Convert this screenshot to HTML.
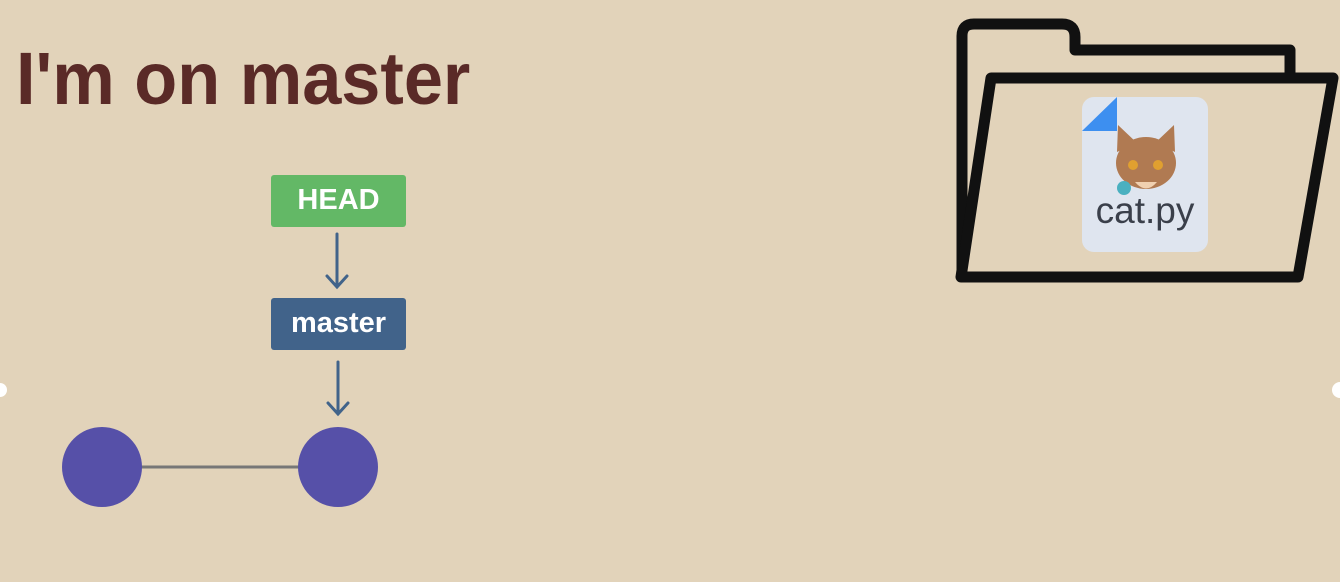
<!DOCTYPE html>
<html><head><meta charset="utf-8"><style>
html,body{margin:0;padding:0}
body{width:1340px;height:582px;background:#e2d3ba;position:relative;overflow:hidden;font-family:"Liberation Sans",sans-serif}
.t{position:absolute;left:16px;top:36px;font-size:74px;font-weight:bold;color:#5a2a27;white-space:nowrap;transform:scaleX(0.95);transform-origin:0 0}
.box{position:absolute;left:271px;width:135px;height:52px;border-radius:3px;color:#fff;font-weight:bold;font-size:29px;text-align:center;line-height:50px}
</style></head><body>
<div class="t">I'm on master</div>
<div class="box" style="top:175px;background:#63b866">HEAD</div>
<div class="box" style="top:298px;background:#41638a">master</div>
<svg width="1340" height="582" style="position:absolute;left:0;top:0">
<g stroke="#41638a" stroke-width="3" fill="none" stroke-linecap="round">
<path d="M337 234V287M327 276L337 287L347 276"/>
<path d="M338 362V414M328 403L338 414L348 403"/>
</g>
<line x1="102" y1="467" x2="338" y2="467" stroke="#777" stroke-width="3"/>
<circle cx="102" cy="467" r="40" fill="#5650a8"/>
<circle cx="338" cy="467" r="40" fill="#5650a8"/>
<circle cx="0" cy="390" r="7" fill="#fff"/>
<circle cx="1340" cy="390" r="8" fill="#fff"/>
<g stroke="#111" stroke-width="11" fill="none" stroke-linejoin="round">
<path d="M962 270V36Q962 24 974 24H1062Q1075 24 1075 37V50H1290V75"/>
<path d="M991 78H1333L1298 277H961Z"/>
</g>
<rect x="1082" y="97" width="126" height="155" rx="12" fill="#dfe5ef"/>
<path d="M1117 97V131H1082Z" fill="#3d8ff0"/>
<ellipse cx="1146" cy="163" rx="30" ry="26" fill="#b07a52"/>
<path d="M1117 152L1118 125L1137 143ZM1175 152L1174 125L1155 143Z" fill="#b07a52"/>
<circle cx="1133" cy="165" r="5" fill="#e0a030"/><circle cx="1158" cy="165" r="5" fill="#e0a030"/>
<path d="M1135 182Q1146 195 1157 182" fill="#f0d0b0"/>
<circle cx="1124" cy="188" r="7" fill="#4ab0c0"/>
</svg>
<div style="position:absolute;left:1082px;top:190px;width:126px;text-align:center;font-size:37px;color:#3a3f4a">cat.py</div>
</body></html>
